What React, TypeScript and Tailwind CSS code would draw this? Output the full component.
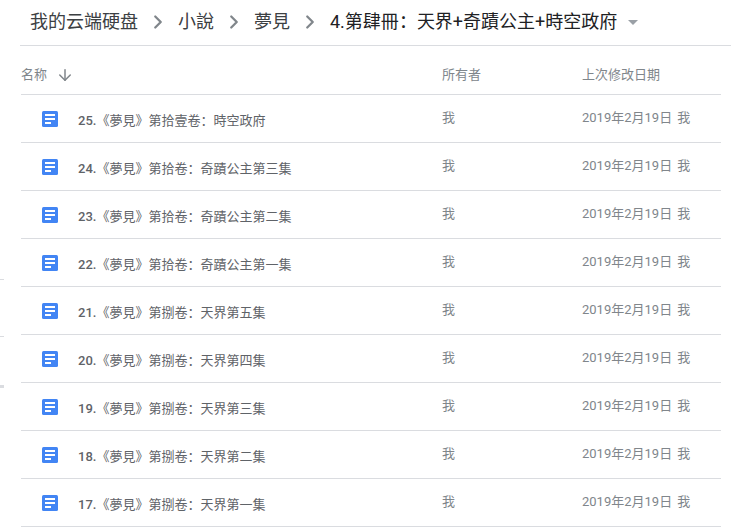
import React from 'react';
import { ArrowDown, ChevronRight } from 'lucide-react';

const files = [
  { num: '25.', title: '《夢見》第拾壹卷\uFF1A時空政府' },
  { num: '24.', title: '《夢見》第拾卷\uFF1A奇蹟公主第三集' },
  { num: '23.', title: '《夢見》第拾卷\uFF1A奇蹟公主第二集' },
  { num: '22.', title: '《夢見》第拾卷\uFF1A奇蹟公主第一集' },
  { num: '21.', title: '《夢見》第捌卷\uFF1A天界第五集' },
  { num: '20.', title: '《夢見》第捌卷\uFF1A天界第四集' },
  { num: '19.', title: '《夢見》第捌卷\uFF1A天界第三集' },
  { num: '18.', title: '《夢見》第捌卷\uFF1A天界第二集' },
  { num: '17.', title: '《夢見》第捌卷\uFF1A天界第一集' },
];

const crumbs = ['我的云端硬盘', '小說', '夢見'];

function DocIcon() {
  return (
    <svg width="16" height="16" viewBox="0 0 16 16" className="shrink-0">
      <rect width="16" height="16" rx="1.5" fill="#4285f4" />
      <rect x="3" y="3" width="10" height="2" fill="#fff" />
      <rect x="3" y="7" width="10" height="2" fill="#fff" />
      <rect x="3" y="11" width="6" height="2" fill="#fff" />
    </svg>
  );
}

export default function App() {
  return (
    <div className="relative w-[731px] h-[527px] overflow-hidden bg-white font-['Roboto','Noto_Sans_CJK_SC',sans-serif]">
      {/* bits of the page behind, showing at the left edge */}
      <div className="absolute left-0 top-[279px] w-1 h-px bg-[#dadce0]" />
      <div className="absolute left-0 top-[336px] w-1 h-px bg-[#dadce0]" />
      <div className="absolute left-0 top-[385px] w-1 h-[3px] bg-[#dadce0]" />

      <div className="ml-5 w-[711px] h-[46px] border-b border-[#dadce0] flex items-center pl-[10px] pb-[2px] text-[18px] text-[#3c4043]">
        {crumbs.map((c) => (
          <React.Fragment key={c}>
            <span>{c}</span>
            <ChevronRight className="w-[22px] h-[22px] mx-[9px] text-[#80868b]" strokeWidth={2.5} />
          </React.Fragment>
        ))}
        <span className="text-[#202124] whitespace-nowrap">4.第肆冊{'\uFF1A'}天界+奇蹟公主+時空政府</span>
        <span className="ml-[11px] mt-[2px] w-0 h-0 border-x-[5px] border-x-transparent border-t-[5px] border-t-[#9aa0a6]" />
      </div>
      <div className="ml-[21px] w-[700px]">
        <div className="h-[49px] border-b border-[#dadce0] flex items-center pt-[9px] text-[13px] text-[#80868b]">
          <div className="w-[421px] flex items-center">
            <span>名称</span>
            <ArrowDown className="w-[18px] h-[18px] ml-[9px] text-[#80868b]" strokeWidth={2} />
          </div>
          <div className="w-[140px]">所有者</div>
          <div>上次修改日期</div>
        </div>
        {files.map((f) => (
          <div key={f.num} className="h-[48px] border-b border-[#dadce0] flex items-center text-[13px]">
            <div className="w-[421px] flex items-center">
              <div className="ml-[21px] mr-[20px]">
                <DocIcon />
              </div>
              <span className="text-[#5f6368] mt-[4px]">
                <span className="font-medium">{f.num}</span>
                {f.title}
              </span>
            </div>
            <div className="w-[140px] text-[#80868b] -mt-[1px]">我</div>
            <div className="text-[#80868b] -mt-[1px] whitespace-nowrap">
              2019年2月19日<span className="ml-[5px]">我</span>
            </div>
          </div>
        ))}
      </div>
    </div>
  );
}
